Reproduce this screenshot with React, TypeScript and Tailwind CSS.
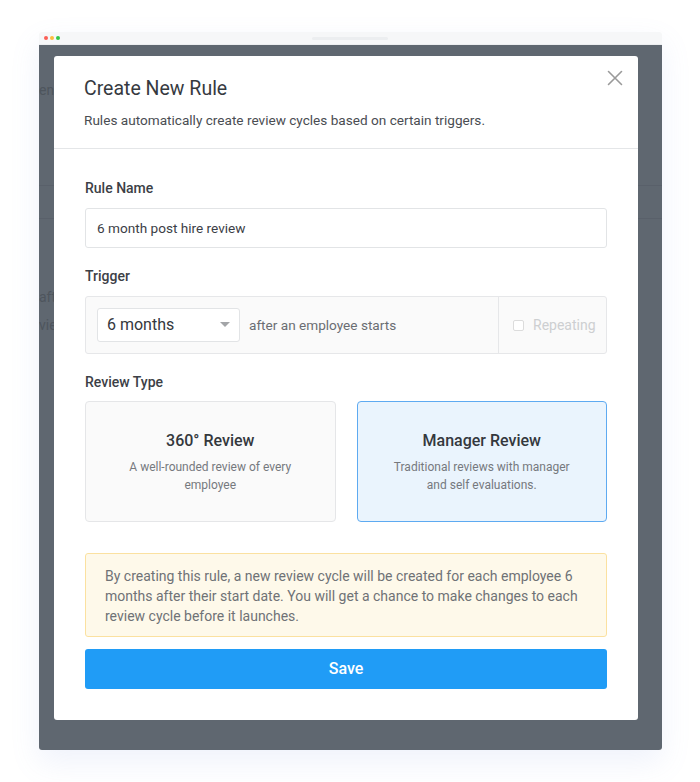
import React from "react";

export default function App() {
  return (
    <div className="w-[700px] h-[782px] bg-white pt-[32px] pl-[39px]" style={{ fontFamily: "Roboto, 'Liberation Sans', sans-serif" }}>
      <div className="w-[623px] rounded-[3px] overflow-hidden shadow-[0_12px_30px_rgba(120,150,220,0.12)]">
        {/* title bar */}
        <div className="relative h-[13px] bg-[#f6f7f8] border-b border-[#eceef0] flex items-center pl-[5px] gap-[2px]">
          <span className="w-[4px] h-[4px] rounded-full bg-[#fb5f57]" />
          <span className="w-[4px] h-[4px] rounded-full bg-[#fdbc3f]" />
          <span className="w-[4px] h-[4px] rounded-full bg-[#33c748]" />
          <span className="absolute left-[273px] top-[5px] w-[76px] h-[3px] rounded-full bg-[#eceef0]" />
        </div>
        {/* overlay */}
        <div className="relative h-[705px] bg-[#5f6770] pl-[15px] pt-[11px]">
          <span className="absolute left-[0px] top-[35px] text-[14px] text-[#4e555d] leading-[20px]">en</span>
          <span className="absolute left-0 right-0 top-[140px] h-px bg-[#59606a]" />
          <span className="absolute left-0 right-0 top-[173px] h-px bg-[#59606a]" />
          <span className="absolute left-[0px] top-[242px] text-[14px] text-[#4e555d] leading-[20px]">afte</span>
          <span className="absolute left-[0px] top-[270px] text-[14px] text-[#4e555d] leading-[20px]">vie</span>

          {/* modal */}
          <div className="relative w-[584px] h-[664px] bg-white rounded-[3px]">
            <button className="absolute right-[15px] top-[14px] w-[16px] h-[16px] text-[#9a9a9a]">
              <svg viewBox="0 0 16 16" width="16" height="16" fill="none" stroke="currentColor" strokeWidth="1.6" strokeLinecap="round">
                <path d="M1.5 1.5 L14.5 14.5 M14.5 1.5 L1.5 14.5" />
              </svg>
            </button>
            <div className="px-[30px] pt-[21px] pb-[18px] border-b border-[#e4e6e8]">
              <h1 className="text-[19.5px] leading-[24px] text-[#363a3f] font-normal">Create New Rule</h1>
              <p className="mt-[9px] text-[13.6px] leading-[20px] text-[#4a4d52]">Rules automatically create review cycles based on certain triggers.</p>
            </div>
            <div className="px-[31px] pt-[29px] pb-[31px]">
              <div className="text-[14px] leading-[20px] font-medium text-[#3c4046]">Rule Name</div>
              <div className="mt-[10px] h-[40px] border border-[#e2e4e6] rounded-[3px] flex items-center pl-[11px] text-[13.6px] text-[#3c4046]">6 month post hire review</div>

              <div className="mt-[18px] text-[14px] leading-[20px] font-medium text-[#3c4046]">Trigger</div>
              <div className="mt-[10px] h-[58px] border border-[#e6e7e9] rounded-[3px] bg-[#fafafa] flex">
                <div className="flex-1 flex items-center pl-[11px]">
                  <div className="w-[143px] h-[34px] bg-white border border-[#e2e4e6] rounded-[3px] flex items-center justify-between pl-[9px] pr-[9px]">
                    <span className="text-[16px] text-[#34383d]">6 months</span>
                    <svg width="10" height="6" viewBox="0 0 10 6"><path d="M0 0 L10 0 L5 5 Z" fill="#a3a5a8" /></svg>
                  </div>
                  <span className="ml-[9px] text-[13.6px] text-[#6a6d72]">after an employee starts</span>
                </div>
                <div className="w-[108px] border-l border-[#e6e7e9] flex items-center pl-[14px] gap-[9px]">
                  <span className="w-[11px] h-[11px] border border-[#dcdcdc] rounded-[2px] bg-white" />
                  <span className="text-[14px] text-[#cdcfd1]">Repeating</span>
                </div>
              </div>

              <div className="mt-[18px] text-[14px] leading-[20px] font-medium text-[#3c4046]">Review Type</div>
              <div className="mt-[9px] grid grid-cols-2 gap-[21px]">
                <div className="h-[121px] border border-[#e5e6e8] rounded-[4px] bg-[#fafafa] flex flex-col items-center justify-center text-center px-[36px]">
                  <div className="text-[16px] leading-[22px] font-medium text-[#34383d]">360° Review</div>
                  <div className="mt-[6px] text-[12px] leading-[18px] text-[#76797e]">A well-rounded review of every employee</div>
                </div>
                <div className="h-[121px] border border-[#5eaaf1] rounded-[4px] bg-[#eaf4fd] flex flex-col items-center justify-center text-center px-[36px]">
                  <div className="text-[16px] leading-[22px] font-medium text-[#34383d]">Manager Review</div>
                  <div className="mt-[6px] text-[12px] leading-[18px] text-[#76797e]">Traditional reviews with manager and self evaluations.</div>
                </div>
              </div>

              <div className="mt-[31px] h-[84px] border border-[#fbe1a0] rounded-[3px] bg-[#fef9ea] px-[19px] pt-[12px] text-[14px] leading-[20px] text-[#6f7276]">
                By creating this rule, a new review cycle will be created for each employee 6 months after their start date. You will get a chance to make changes to each review cycle before it launches.
              </div>

              <button className="mt-[12px] w-full h-[40px] rounded-[3px] bg-[#209cf6] text-white text-[16px] font-medium">Save</button>
            </div>
          </div>
        </div>
      </div>
    </div>
  );
}
